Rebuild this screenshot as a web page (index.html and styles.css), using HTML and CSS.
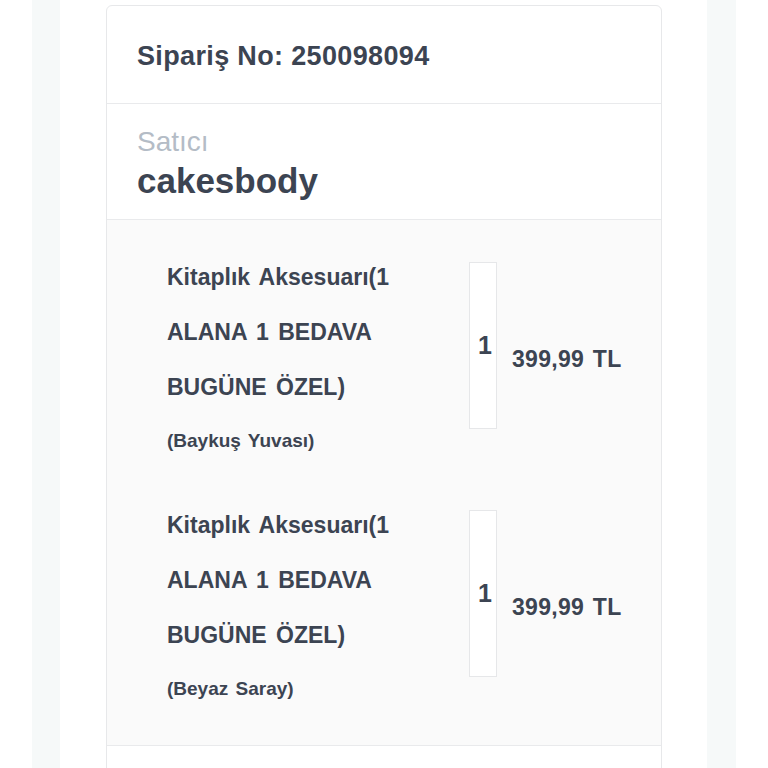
FILE: index.html
```html
<!DOCTYPE html>
<html lang="tr">
<head>
<meta charset="utf-8">
<link rel="stylesheet" href="styles.css">
</head>
<body>
<div class="page">
  <div class="frame">
    <div class="content">
      <div class="card">
        <div class="card-header">Sipariş No: 250098094</div>
        <div class="seller">
          <div class="seller-label">Satıcı</div>
          <div class="seller-name">cakesbody</div>
        </div>
        <div class="items">
          <div class="item">
            <div class="item-info">
              <div class="item-name">Kitaplık Aksesuarı(1 ALANA 1 BEDAVA BUGÜNE ÖZEL)</div>
              <div class="item-variant">(Baykuş Yuvası)</div>
            </div>
            <div class="item-qty">1</div>
            <div class="item-price">399,99 TL</div>
          </div>
          <div class="item">
            <div class="item-info">
              <div class="item-name">Kitaplık Aksesuarı(1 ALANA 1 BEDAVA BUGÜNE ÖZEL)</div>
              <div class="item-variant">(Beyaz Saray)</div>
            </div>
            <div class="item-qty">1</div>
            <div class="item-price">399,99 TL</div>
          </div>
        </div>
        <div class="card-footer"></div>
      </div>
    </div>
  </div>
</div>
</body>
</html>
```
FILE: styles.css
```css
* { box-sizing: border-box; }
html, body { margin: 0; padding: 0; background: #ffffff; }
body {
  font-family: "Liberation Sans", Arial, sans-serif;
  color: #3c4452;
  height: 768px;
  overflow: hidden;
}
.page { padding: 0 32px; height: 100%; }
.frame { background: #f6f9f9; padding: 0 29px 0 28px; height: 100%; }
.content { background: #ffffff; padding: 5px 45px 0 46px; height: 100%; }
.card {
  border: 1px solid #e7e8ea;
  border-radius: 6px;
  background: #ffffff;
}
.card-header {
  padding: 34px 30px 31px;
  font-size: 27px;
  line-height: 32px;
  font-weight: 700;
  letter-spacing: 0.35px;
  border-bottom: 1px solid #e9eaec;
}
.seller {
  padding: 22px 30px 18px;
  border-bottom: 1px solid #e9eaec;
}
.seller-label {
  font-size: 28px;
  line-height: 32px;
  color: #b4bcc6;
}
.seller-name {
  margin-top: 3px;
  font-size: 35px;
  line-height: 40px;
  font-weight: 700;
}
.items {
  background: #fafafa;
  padding: 30px 20px 44px 60px;
  border-bottom: 1px solid #e9eaec;
  display: flex;
  flex-direction: column;
  gap: 45px;
}
.item { display: flex; align-items: flex-start; }
.item-info { width: 280px; margin-right: 22px; }
.item-name {
  font-size: 23px;
  line-height: 55px;
  font-weight: 700;
  word-spacing: 3px;
}
.item-variant {
  margin-top: 14px;
  font-size: 19px;
  line-height: 24px;
  font-weight: 700;
  word-spacing: 2px;
}
.item-qty {
  margin-top: 12px;
  width: 28px;
  height: 167px;
  border: 1px solid #e6e7e9;
  background: #ffffff;
  display: flex;
  align-items: center;
  justify-content: center;
  font-size: 25px;
  font-weight: 700;
  padding-left: 4px;
}
.item-price {
  margin-top: 96px;
  margin-left: 15px;
  font-size: 23px;
  line-height: 26px;
  font-weight: 700;
  letter-spacing: 0.3px;
  word-spacing: 2px;
  white-space: nowrap;
}
.card-footer { height: 120px; }
```
